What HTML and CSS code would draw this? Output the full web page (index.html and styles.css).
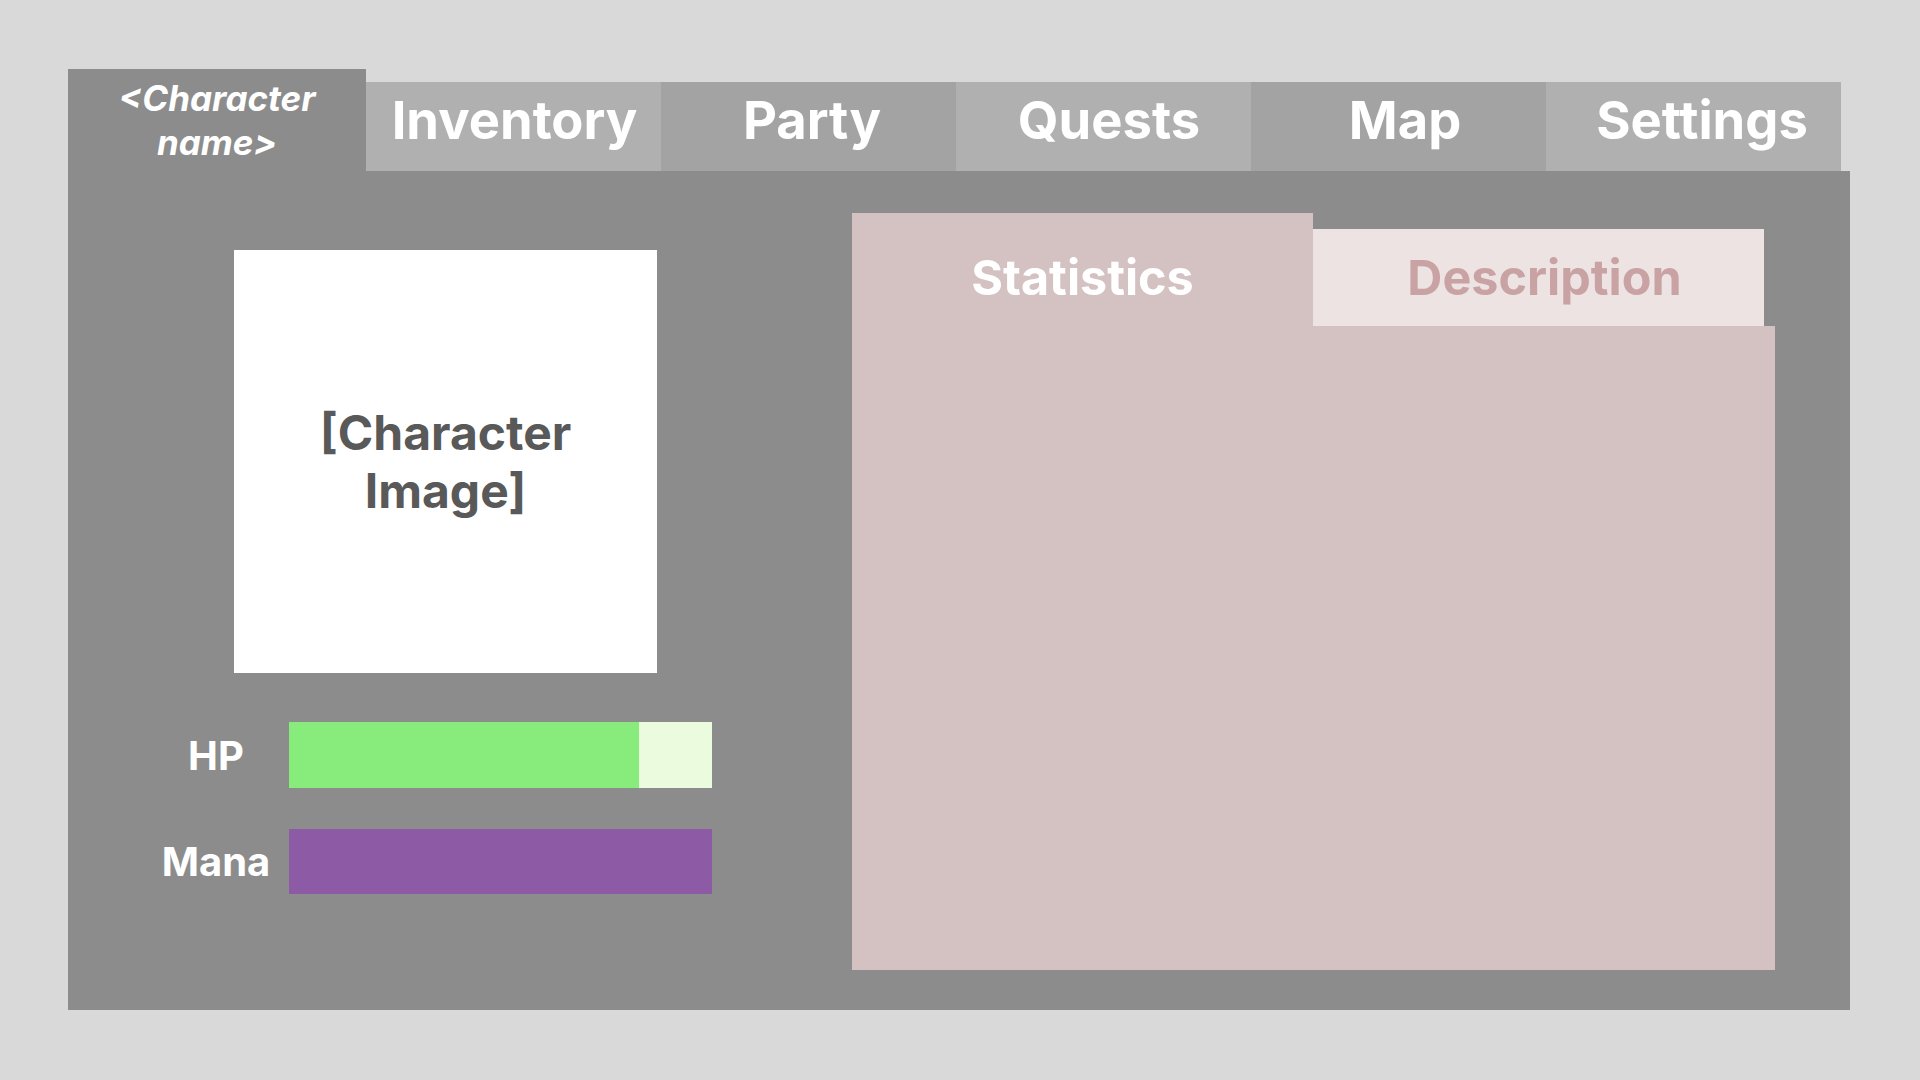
FILE: index.html
```html
<!DOCTYPE html>
<html>
<head>
<meta charset="utf-8">
<link rel="stylesheet" href="styles.css">
</head>
<body>
<div class="window">
  <div class="tabbar">
    <div class="tab-char">&lt;Character<br>name&gt;</div>
    <div class="tab light t1">Inventory</div>
    <div class="tab dark t2">Party</div>
    <div class="tab light t3">Quests</div>
    <div class="tab dark t4">Map</div>
    <div class="tab light t5">Settings</div>
  </div>
  <div class="panel">
    <div class="left">
      <div class="portrait">[Character<br>Image]</div>
      <div class="stat-row hp-row">
        <div class="stat-label">HP</div>
        <div class="bar hp"><div class="fill" style="width: 82.7%"></div></div>
      </div>
      <div class="stat-row mana-row">
        <div class="stat-label">Mana</div>
        <div class="bar mana"></div>
      </div>
    </div>
    <div class="details">
      <div class="dtabs">
        <div class="dtab active">Statistics</div>
        <div class="dtab inactive">Description</div>
      </div>
      <div class="dbody"></div>
    </div>
  </div>
</div>
</body>
</html>
```

FILE: styles.css
```css
html, body {
  margin: 0;
  padding: 0;
}
body {
  background: #d9d9d9;
  font-family: Inter, "Noto Sans", "Liberation Sans", sans-serif;
  width: 1920px;
  height: 1080px;
  overflow: hidden;
}
.window {
  margin: 69px 0 0 68px;
  width: 1782px;
}
.tabbar {
  display: flex;
  align-items: flex-end;
  height: 102px;
}
.tab-char {
  width: 298px;
  height: 102px;
  background: #8c8c8c;
  color: #fff;
  font-weight: 700;
  font-style: italic;
  font-size: 35px;
  line-height: 44px;
  text-align: center;
  display: flex;
  align-items: center;
  justify-content: center;
}
.tab {
  width: 295px;
  height: 89px;
  box-sizing: border-box;
  padding-bottom: 13px;
  display: flex;
  align-items: center;
  justify-content: center;
  color: #fff;
  font-weight: 700;
  font-size: 52.5px;
}
.tab.light { background: #b0b0b0; }
.tab.dark { background: #a3a3a3; }
.tab.t1 { padding-left: 2px; }
.tab.t2 { padding-left: 7px; }
.tab.t3 { padding-left: 11px; }
.tab.t4 { padding-left: 13px; }
.tab.t5 { padding-left: 17px; }
.panel {
  background: #8c8c8c;
  height: 839px;
  box-sizing: border-box;
  padding: 42px 75px 40px 75px;
  display: flex;
  gap: 140px;
}
.left {
  width: 569px;
  padding-top: 37px;
}
.portrait {
  margin-left: 91px;
  width: 423px;
  height: 423px;
  background: #fff;
  color: #595959;
  font-weight: 700;
  font-size: 48px;
  line-height: 58px;
  text-align: center;
  display: flex;
  align-items: center;
  justify-content: center;
}
.stat-row {
  display: flex;
  align-items: center;
}
.hp-row { margin-top: 49px; }
.mana-row { margin-top: 41px; }
.stat-label {
  width: 146px;
  text-align: center;
  color: #fff;
  font-weight: 700;
  font-size: 40px;
}
.bar {
  width: 423px;
  height: 66px;
}
.bar.hp { background: #eafcdd; }
.bar.hp .fill { height: 100%; background: #87ec7b; }
.bar.mana { background: #8d5aa6; height: 65px; }
.details {
  width: 923px;
  display: flex;
  flex-direction: column;
}
.dtabs {
  display: flex;
  align-items: flex-end;
  height: 113px;
}
.dtab {
  display: flex;
  align-items: center;
  justify-content: center;
  font-weight: 700;
  font-size: 48.5px;
  box-sizing: border-box;
}
.dtab.active {
  width: 461px;
  height: 113px;
  padding-top: 16px;
  background: #d4c1c1;
  color: #fff;
}
.dtab.inactive {
  width: 451px;
  height: 97px;
  padding-left: 12px;
  background: #ede3e3;
  color: #c9a3a3;
}
.dbody {
  flex: 1;
  background: #d4c1c1;
}
```
